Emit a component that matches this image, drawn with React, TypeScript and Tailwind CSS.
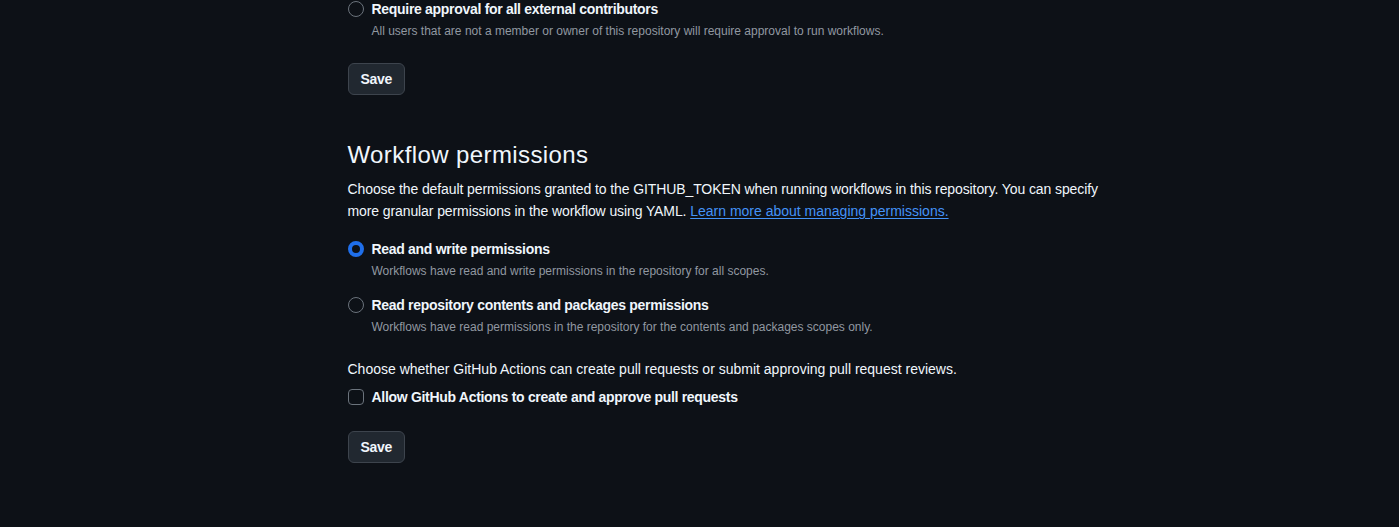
import React from 'react'

const font = { fontFamily: '"Liberation Sans", Arial, sans-serif' }

function Radio({ checked }: { checked?: boolean }) {
  return checked ? (
    <span className="mt-0.5 box-border block h-4 w-4 shrink-0 rounded-full border-4 border-[#1f6feb] bg-[#0d1117]" />
  ) : (
    <span className="mt-0.5 box-border block h-4 w-4 shrink-0 rounded-full border border-[#6b737c] bg-[#0d1117]" />
  )
}

function Option({
  label,
  caption,
  checked,
  className,
}: {
  label: string
  caption: string
  checked?: boolean
  className?: string
}) {
  return (
    <div className={className}>
      <div className="flex gap-2">
        <Radio checked={checked} />
        <span className="text-sm font-bold leading-5 tracking-[-0.3px] text-[#f0f6fc]">{label}</span>
      </div>
      <p className="mt-0.5 pl-6 text-xs leading-5 text-[#9198a1]">{caption}</p>
    </div>
  )
}

function SaveButton({ className }: { className?: string }) {
  return (
    <button
      className={`h-8 rounded-md border border-[#3d444d] bg-[#212830] px-3 text-sm font-bold tracking-[-0.3px] text-[#f0f6fc] ${className ?? ''}`}
    >
      Save
    </button>
  )
}

export default function App() {
  return (
    <div className="min-h-[527px] overflow-hidden bg-[#0d1117] text-[#f0f6fc]" style={font}>
      <div className="mx-auto flex w-[1280px] gap-8">
        <aside className="w-64 shrink-0" />
        <main className="-mt-px w-[768px]">
          <Option
            label="Require approval for all external contributors"
            caption="All users that are not a member or owner of this repository will require approval to run workflows."
          />
          <SaveButton className="mt-[22px]" />

          <h2 className="mt-[42px] text-2xl font-normal leading-9 tracking-[0.4px]">Workflow permissions</h2>
          <p className="mt-[5px] text-sm leading-[22px] tracking-[-0.1px]">
            Choose the default permissions granted to the GITHUB_TOKEN when running workflows in this repository. You can
            specify more granular permissions in the workflow using YAML.{' '}
            <a href="#" className="tracking-normal text-[#4493f8] underline underline-offset-2">
              Learn more about managing permissions.
            </a>
          </p>

          <Option
            className="mt-[17px]"
            checked
            label="Read and write permissions"
            caption="Workflows have read and write permissions in the repository for all scopes."
          />
          <Option
            className="mt-[14px]"
            label="Read repository contents and packages permissions"
            caption="Workflows have read permissions in the repository for the contents and packages scopes only."
          />

          <p className="mt-[22px] text-sm leading-5">
            Choose whether GitHub Actions can create pull requests or submit approving pull request reviews.
          </p>
          <label className="mt-2 flex gap-2">
            <span className="mt-0.5 box-border block h-4 w-4 shrink-0 rounded-[4px] border border-[#6b737c] bg-[#0d1117]" />
            <span className="text-sm font-bold leading-5 tracking-[-0.3px]">
              Allow GitHub Actions to create and approve pull requests
            </span>
          </label>
          <SaveButton className="mt-6" />
        </main>
      </div>
    </div>
  )
}
